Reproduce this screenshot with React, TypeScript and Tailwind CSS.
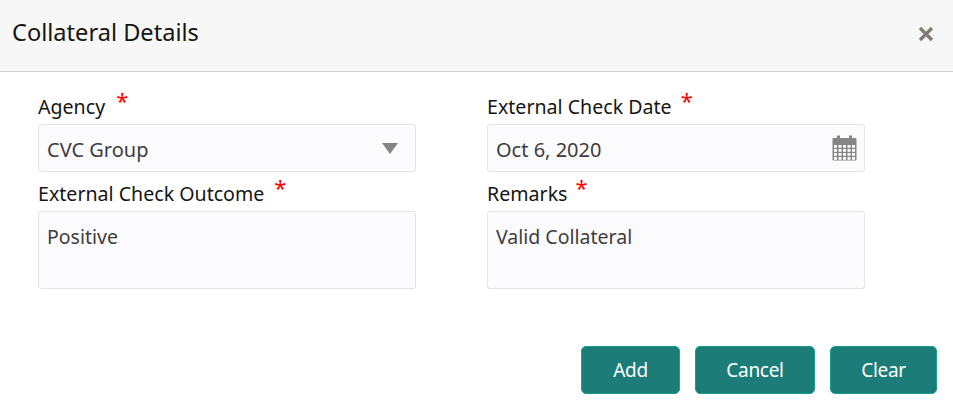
const font = "font-['Noto_Sans','Open_Sans',sans-serif]";

function FieldLabel({ label, starGap = "ml-[10px]" }: { label: string; starGap?: string }) {
  return (
    <div className="flex h-[37px] items-center pt-[2px] text-[19.6px] leading-none text-[#161513]">
      <span>{label}</span>
      <span className={`-mt-[13px] ${starGap} text-[22px] leading-none text-[#ff0000]`}>*</span>
    </div>
  );
}

function CalendarIcon() {
  return (
    <svg width="25" height="26" viewBox="0 0 25 26" aria-hidden="true">
      <rect x="0.5" y="3" width="24" height="22.5" rx="1" fill="#858585" />
      <rect x="5" y="0.5" width="3" height="6" fill="#858585" />
      <rect x="17" y="0.5" width="3" height="6" fill="#858585" />
      {[10, 14, 18, 22].map((y) =>
        [2, 6.5, 11, 15.5, 20].map((x) => (
          <rect key={`${x}-${y}`} x={x} y={y} width="3" height="2.8" fill="#fbfbff" />
        )),
      )}
    </svg>
  );
}

function FieldBox({ children, tall }: { children: React.ReactNode; tall?: boolean }) {
  return (
    <div
      className={`flex w-[378px] justify-between rounded-[3px] border border-[#e4e4e6] bg-[#fbfbfe] pl-[8px] text-[#3f3d3b] ${
        tall ? "h-[78px] items-start pt-[10px] text-[19.5px] leading-[30px]" : "h-[48px] items-center text-[20px] leading-none"
      }`}
    >
      {children}
    </div>
  );
}

function ActionButton({ label, width }: { label: string; width: string }) {
  return (
    <button
      type="button"
      className={`${width} h-[48px] rounded-[5px] border border-[#14a090] bg-[#1c7d78] text-[19px] tracking-[-0.3px] text-white`}
    >
      {label}
    </button>
  );
}

export default function App() {
  return (
    <div className={`flex h-[418px] w-[953px] flex-col overflow-hidden bg-white ${font}`}>
      <header className="flex h-[72px] shrink-0 items-center justify-between border-b border-[#cfcfcf] bg-[#f7f7f7] pr-[19px] pb-[6px] pl-[12px]">
        <h1 className="text-[23.6px] font-normal text-[#161513]">Collateral Details</h1>
        <svg className="mt-[2px]" width="16" height="16" viewBox="0 0 16 16" aria-hidden="true">
          <path d="M2 2 L14 14 M14 2 L2 14" stroke="#7f7a72" strokeWidth="3.2" />
        </svg>
      </header>

      <div className="grid grid-cols-[378px_378px] gap-x-[71px] pt-[15px] pl-[38px]">
        <div>
          <FieldLabel label="Agency" starGap="ml-[11px]" />
          <FieldBox>
            <span className="pt-[3px]">CVC Group</span>
            <svg className="mr-[17px]" width="16" height="11" viewBox="0 0 16 11" aria-hidden="true">
              <path d="M0 0 H16 L8 11 Z" fill="#858585" />
            </svg>
          </FieldBox>
        </div>
        <div>
          <FieldLabel label="External Check Date" starGap="ml-[9px]" />
          <FieldBox>
            <span className="pt-[3px]">Oct 6, 2020</span>
            <span className="mr-[7px] flex">
              <CalendarIcon />
            </span>
          </FieldBox>
        </div>
        <div className="mt-[2px]">
          <FieldLabel label="External Check Outcome" />
          <FieldBox tall>Positive</FieldBox>
        </div>
        <div className="mt-[2px]">
          <FieldLabel label="Remarks" starGap="ml-[8px]" />
          <FieldBox tall>Valid Collateral</FieldBox>
        </div>
      </div>

      <div className="mt-[57px] flex justify-end gap-[15px] pr-[16px]">
        <ActionButton label="Add" width="w-[99px]" />
        <ActionButton label="Cancel" width="w-[120px]" />
        <ActionButton label="Clear" width="w-[107px]" />
      </div>
    </div>
  );
}
